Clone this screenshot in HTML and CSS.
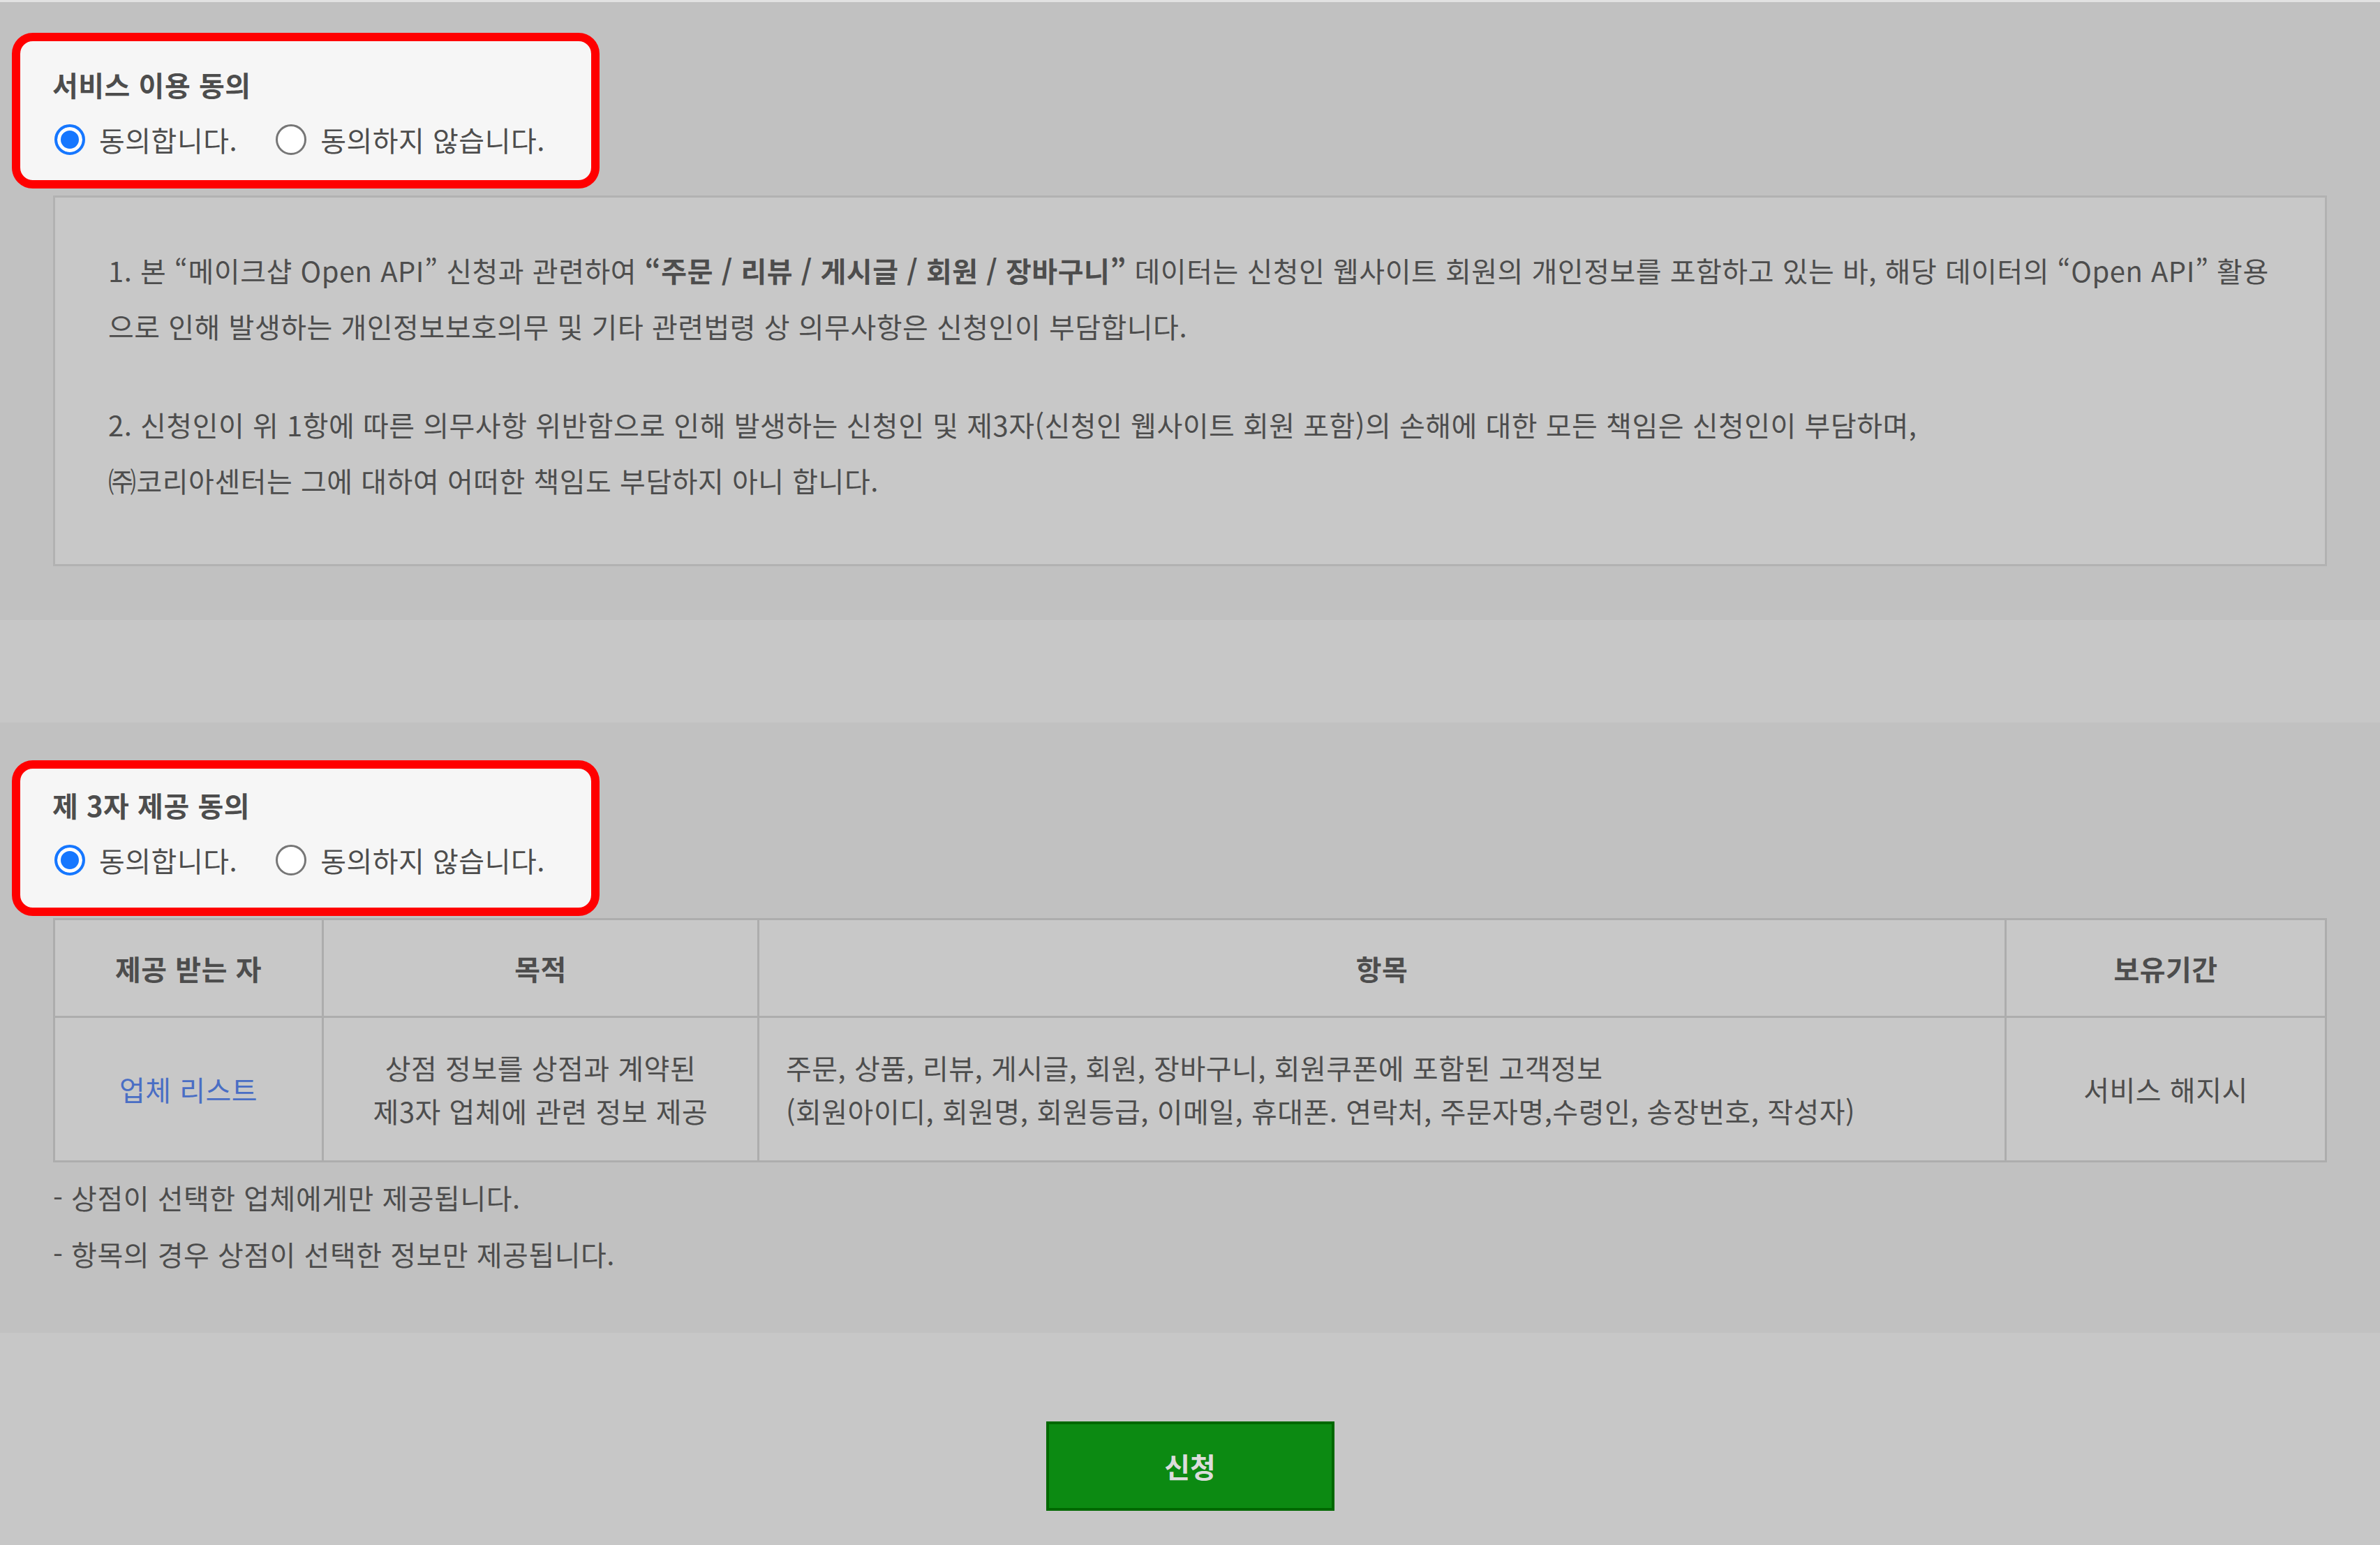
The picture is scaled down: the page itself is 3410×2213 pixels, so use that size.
FILE: index.html
```html
<!DOCTYPE html>
<html lang="ko">

<head>
  <meta charset="UTF-8" />
  <meta name="viewport" content="width=device-width, initial-scale=1.0" />
  <title>Open API 신청</title>
  <link rel="stylesheet" href="styles.css">
</head>

<body>
  <section class="agree-section agree-section--service">
    <div class="agree-head">
      <h2>서비스 이용 동의</h2>
      <div class="agree-options">
        <label><input type="radio" name="service" checked /> 동의합니다.</label>
        <label><input type="radio" name="service" /> 동의하지 않습니다.</label>
      </div>
    </div>

    <div class="terms">
      <p>1. 본 “메이크샵 Open API” 신청과 관련하여 <strong>“주문 / 리뷰 / 게시글 / 회원 / 장바구니”</strong> 데이터는 신청인 웹사이트 회원의 개인정보를 포함하고 있는 바, 해당 데이터의 “Open API” 활용<br>으로 인해 발생하는 개인정보보호의무 및 기타 관련법령 상 의무사항은 신청인이 부담합니다.</p>
      <p>2. 신청인이 위 1항에 따른 의무사항 위반함으로 인해 발생하는 신청인 및 제3자(신청인 웹사이트 회원 포함)의 손해에 대한 모든 책임은 신청인이 부담하며,<br>㈜코리아센터는 그에 대하여 어떠한 책임도 부담하지 아니 합니다.</p>
    </div>
  </section>

  <div class="section-gap"></div>

  <section class="agree-section agree-section--third">
    <div class="agree-head agree-head--tight">
      <h2>제 3자 제공 동의</h2>
      <div class="agree-options">
        <label><input type="radio" name="third" checked /> 동의합니다.</label>
        <label><input type="radio" name="third" /> 동의하지 않습니다.</label>
      </div>
    </div>

    <table class="provide-table">
      <colgroup>
        <col class="col-who">
        <col class="col-purpose">
        <col class="col-items">
        <col class="col-period">
      </colgroup>
      <thead>
        <tr>
          <th>제공 받는 자</th>
          <th>목적</th>
          <th>항목</th>
          <th>보유기간</th>
        </tr>
      </thead>
      <tbody>
        <tr>
          <td><a href="#" class="vendor-link">업체 리스트</a></td>
          <td>상점 정보를 상점과 계약된<br>제3자 업체에 관련 정보 제공</td>
          <td class="items">주문, 상품, 리뷰, 게시글, 회원, 장바구니, 회원쿠폰에 포함된 고객정보<br>(회원아이디, 회원명, 회원등급, 이메일, 휴대폰. 연락처, 주문자명,수령인, 송장번호, 작성자)</td>
          <td>서비스 해지시</td>
        </tr>
      </tbody>
    </table>

    <ul class="notes">
      <li>- 상점이 선택한 업체에게만 제공됩니다.</li>
      <li>- 항목의 경우 상점이 선택한 정보만 제공됩니다.</li>
    </ul>
  </section>

  <div class="submit-area">
    <button type="button" class="submit-btn">신청</button>
  </div>
</body>

</html>
```

FILE: styles.css
```css
html,
body {
  margin: 0;
  padding: 0;
}

body {
  font-family: 'Noto Sans CJK KR', 'Noto Sans', sans-serif;
  font-size: 40px;
  letter-spacing: 0.5px;
  color: #4d4d4d;
  background-color: #c7c7c7;
  border-top: 3px solid #e2e2e2;
  min-height: 2210px;
  box-sizing: border-box;
}

.agree-section {
  background-color: #c1c1c1;
  padding: 0 76px;
}

.agree-section--service {
  padding-top: 44px;
  padding-bottom: 77px;
}

.agree-section--third {
  padding-top: 54px;
  padding-bottom: 72px;
}

.section-gap {
  height: 147px;
}

/* highlighted agreement header */
.agree-head {
  width: 842px;
  box-sizing: border-box;
  margin-left: -59px;
  padding: 37px 46px 33px;
  background-color: #f6f6f6;
  border: 12px solid #ff0000;
  border-radius: 30px;
}

.agree-head--tight {
  padding-top: 27px;
  padding-bottom: 43px;
}

.agree-head h2 {
  margin: 0;
  font-size: 40px;
  line-height: 50px;
  font-weight: bold;
  color: #4d4d4d;
}

.agree-options {
  display: flex;
  align-items: center;
  gap: 52px;
  margin-top: 29px;
  height: 50px;
}

.agree-options label {
  display: flex;
  align-items: center;
  gap: 20px;
  line-height: 50px;
  color: #4d4d4d;
}

.agree-options input[type="radio"] {
  appearance: none;
  -webkit-appearance: none;
  margin: 0 0 0 3px;
  width: 44px;
  height: 44px;
  border: 3px solid #767676;
  border-radius: 50%;
  background: #fff;
  box-sizing: border-box;
}

.agree-options input[type="radio"]:checked {
  border: 4px solid #1677ff;
  background: #1677ff;
  box-shadow: inset 0 0 0 5px #fff;
}

/* terms box */
.terms {
  margin-top: 10px;
  padding: 64px 76px 80px;
  background-color: #c8c8c8;
  border: 3px solid #b2b2b2;
}

.terms p {
  margin: 0;
  line-height: 80px;
  white-space: nowrap;
}

.terms p + p {
  margin-top: 61px;
}

.terms strong {
  font-weight: bold;
}

/* provide table */
.provide-table {
  width: 100%;
  margin-top: 3px;
  border-collapse: collapse;
  background-color: #c8c8c8;
  table-layout: fixed;
}

.col-who {
  width: 385px;
}

.col-purpose {
  width: 624px;
}

.col-period {
  width: 459px;
}

.provide-table th,
.provide-table td {
  border: 3px solid #adadad;
  text-align: center;
  vertical-align: middle;
}

.provide-table th {
  height: 137px;
  padding: 0;
  font-weight: bold;
  line-height: 50px;
}

.provide-table td {
  height: 204px;
  padding: 0;
  line-height: 62px;
}

.provide-table td.items {
  text-align: left;
  padding-left: 38px;
  white-space: nowrap;
}

.vendor-link {
  color: #4a6ec4;
  text-decoration: none;
}

.notes {
  list-style: none;
  margin: 10px 0 0;
  padding: 0;
}

.notes li {
  line-height: 81px;
}

/* submit */
.submit-area {
  display: flex;
  justify-content: center;
  padding-top: 127px;
}

.submit-btn {
  width: 413px;
  height: 128px;
  background-color: #0c8a12;
  border: 4px solid #006800;
  color: #dcdcdc;
  font-family: 'Noto Sans CJK KR', sans-serif;
  font-size: 40px;
  font-weight: bold;
}
```
